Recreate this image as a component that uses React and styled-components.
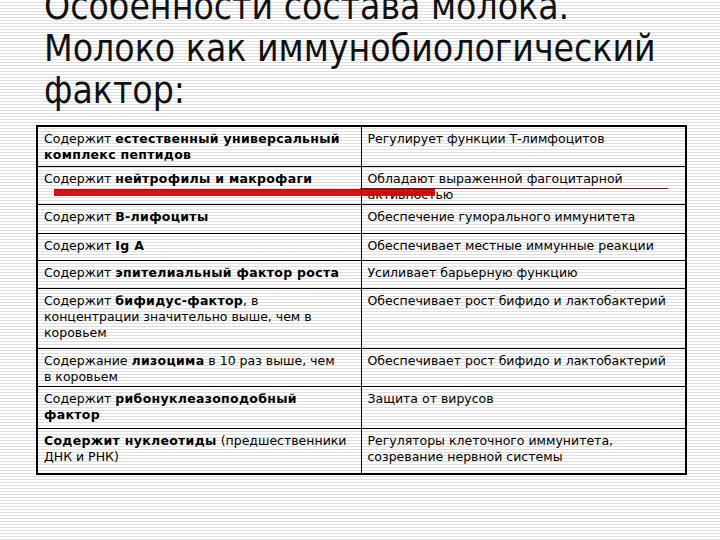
import styled, { createGlobalStyle } from "styled-components";

const GlobalStyle = createGlobalStyle`
  html, body {
    margin: 0;
    padding: 0;
  }
  body {
    width: 720px;
    height: 540px;
    overflow: hidden;
    background-color: #ffffff;
    background-image: repeating-linear-gradient(
      to bottom,
      #ffffff 0px,
      #ffffff 2px,
      #dedede 2px,
      #dedede 3px
    );
    font-family: "DejaVu Sans", Verdana, sans-serif;
    color: #000;
  }
`;

// line breaks follow the original slide
const rows = [
  {
    h: 40,
    left: (
      <>
        Содержит <b>естественный универсальный</b>
        <br />
        <b>комплекс пептидов</b>
      </>
    ),
    right: "Регулирует функции Т-лимфоцитов",
  },
  {
    h: 38,
    left: (
      <>
        Содержит <b>нейтрофилы и макрофаги</b>
      </>
    ),
    right: (
      <>
        Обладают выраженной фагоцитарной
        <br />
        активностью
      </>
    ),
  },
  {
    h: 29,
    left: (
      <>
        Содержит <b>В-лифоциты</b>
      </>
    ),
    right: "Обеспечение гуморального иммунитета",
  },
  {
    h: 27,
    left: (
      <>
        Содержит <b>Ig A</b>
      </>
    ),
    right: "Обеспечивает местные иммунные реакции",
  },
  {
    h: 28,
    left: (
      <>
        Содержит <b>эпителиальный фактор роста</b>
      </>
    ),
    right: "Усиливает барьерную функцию",
  },
  {
    h: 60,
    left: (
      <>
        Содержит <b>бифидус-фактор</b>, в
        <br />
        концентрации значительно выше, чем в
        <br />
        коровьем
      </>
    ),
    right: "Обеспечивает рост бифидо и лактобактерий",
  },
  {
    h: 38,
    left: (
      <>
        Содержание <b>лизоцима</b> в 10 раз выше, чем
        <br />в коровьем
      </>
    ),
    right: "Обеспечивает рост бифидо и лактобактерий",
  },
  {
    h: 42,
    left: (
      <>
        Содержит <b>рибонуклеазоподобный</b>
        <br />
        <b>фактор</b>
      </>
    ),
    right: "Защита от вирусов",
  },
  {
    h: 46,
    left: (
      <>
        <b>Содержит нуклеотиды</b> (предшественники
        <br />
        ДНК и РНК)
      </>
    ),
    right: (
      <>
        Регуляторы клеточного иммунитета,
        <br />
        созревание нервной системы
      </>
    ),
  },
];

const App = () => {
  return (
    <>
      <GlobalStyle />
      <Slide>
        <Title>
          Особенности состава молока.
          <br />
          Молоко как иммунобиологический
          <br />
          фактор:
        </Title>
        <TableWrap>
          <Table>
            <colgroup>
              <Col $w={324} />
              <Col $w={325} />
            </colgroup>
            <tbody>
              {rows.map((row, i) => (
                <Row key={i} $h={row.h}>
                  <Cell>{row.left}</Cell>
                  <Cell>{row.right}</Cell>
                </Row>
              ))}
            </tbody>
          </Table>
          <RedBar />
          <RedLine />
        </TableWrap>
      </Slide>
    </>
  );
};

const Slide = styled.div`
  padding: 0 0 0 36px;
`;

const Title = styled.h1`
  margin: -14px 0 0 8px;
  font-family: "DejaVu Sans Condensed", Tahoma, sans-serif;
  font-weight: normal;
  font-size: 37px;
  line-height: 42px;
  color: #111;
`;

const TableWrap = styled.div`
  position: relative;
  width: 649px;
  margin-top: 13px;
`;

const Table = styled.table`
  width: 649px;
  border-collapse: collapse;
  border: 2px solid #000;
  table-layout: fixed;
`;

const Col = styled.col`
  width: ${(p) => p.$w}px;
`;

const Row = styled.tr`
  height: ${(p) => p.$h}px;
  border-bottom: 1px solid #000;
`;

const Cell = styled.td`
  vertical-align: top;
  padding: 4px 4px 0 6px;
  font-size: 12.5px;
  line-height: 16px;
  white-space: nowrap;
  border-left: 1px solid #000;

  b {
    font-weight: bold;
    letter-spacing: 0.3px;
  }
`;

const RedBar = styled.div`
  position: absolute;
  left: 18px;
  top: 64px;
  width: 381px;
  height: 7px;
  background: #d40000;
  border-top: 1px solid #9a0000;
  box-sizing: border-box;
  opacity: 0.92;
`;

const RedLine = styled.div`
  position: absolute;
  left: 324px;
  top: 63px;
  width: 308px;
  height: 1px;
  background: #6a1818;
`;

export default App;
